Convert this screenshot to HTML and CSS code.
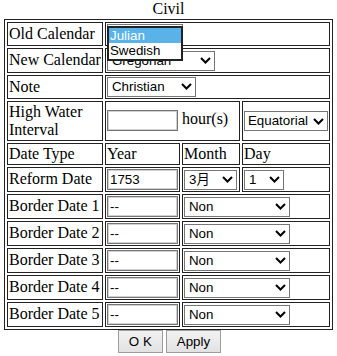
FILE: index.html
```html
<!DOCTYPE html>
<html>
  <head>
    <meta charset="utf-8">
    <title>Civil Calendar</title>
    <link rel="stylesheet" href="styles.css">
  </head>
  <body>
    <div class="title">Civil</div>
    <table class="calTable">
      <colgroup>
        <col class="c1"><col class="c2"><col class="c3"><col class="c4">
      </colgroup>
      <tr>
        <td>Old Calendar</td>
        <td colspan="3">
          <span class="dropWrap">
            <span class="sel wOld"><span>Julian</span><svg class="chev" width="11" height="7" viewBox="0 0 11 7"><polyline points="1,1 5.5,5.5 10,1"/></svg></span>
            <ul class="dropList">
              <li class="on">Julian</li>
              <li>Swedish</li>
            </ul>
          </span>
        </td>
      </tr>
      <tr>
        <td>New Calendar</td>
        <td colspan="3">
          <span class="sel wGreg"><span>Gregorian</span><svg class="chev" width="11" height="7" viewBox="0 0 11 7"><polyline points="1,1 5.5,5.5 10,1"/></svg></span>
        </td>
      </tr>
      <tr>
        <td>Note</td>
        <td colspan="3">
          <span class="sel wChr"><span>Christian</span><svg class="chev" width="11" height="7" viewBox="0 0 11 7"><polyline points="1,1 5.5,5.5 10,1"/></svg></span>
        </td>
      </tr>
      <tr>
        <td>High Water Interval</td>
        <td colspan="2"><input class="txt" type="text" value=""> hour(s)</td>
        <td>
          <span class="sel wEq"><span>Equatorial</span><svg class="chev" width="11" height="7" viewBox="0 0 11 7"><polyline points="1,1 5.5,5.5 10,1"/></svg></span>
        </td>
      </tr>
      <tr>
        <td>Date Type</td>
        <td>Year</td>
        <td>Month</td>
        <td>Day</td>
      </tr>
      <tr>
        <td>Reform Date</td>
        <td><input class="txt" type="text" value="1753"></td>
        <td>
          <span class="sel wMon"><span>3月</span><svg class="chev" width="11" height="7" viewBox="0 0 11 7"><polyline points="1,1 5.5,5.5 10,1"/></svg></span>
        </td>
        <td>
          <span class="sel wDay"><span>1</span><svg class="chev" width="11" height="7" viewBox="0 0 11 7"><polyline points="1,1 5.5,5.5 10,1"/></svg></span>
        </td>
      </tr>
      <tr>
        <td>Border Date 1</td>
        <td><input class="txt" type="text" value="--"></td>
        <td colspan="2">
          <span class="sel wNon"><span>Non</span><svg class="chev" width="11" height="7" viewBox="0 0 11 7"><polyline points="1,1 5.5,5.5 10,1"/></svg></span>
        </td>
      </tr>
      <tr>
        <td>Border Date 2</td>
        <td><input class="txt" type="text" value="--"></td>
        <td colspan="2">
          <span class="sel wNon"><span>Non</span><svg class="chev" width="11" height="7" viewBox="0 0 11 7"><polyline points="1,1 5.5,5.5 10,1"/></svg></span>
        </td>
      </tr>
      <tr>
        <td>Border Date 3</td>
        <td><input class="txt" type="text" value="--"></td>
        <td colspan="2">
          <span class="sel wNon"><span>Non</span><svg class="chev" width="11" height="7" viewBox="0 0 11 7"><polyline points="1,1 5.5,5.5 10,1"/></svg></span>
        </td>
      </tr>
      <tr>
        <td>Border Date 4</td>
        <td><input class="txt" type="text" value="--"></td>
        <td colspan="2">
          <span class="sel wNon"><span>Non</span><svg class="chev" width="11" height="7" viewBox="0 0 11 7"><polyline points="1,1 5.5,5.5 10,1"/></svg></span>
        </td>
      </tr>
      <tr>
        <td>Border Date 5</td>
        <td><input class="txt" type="text" value="--"></td>
        <td colspan="2">
          <span class="sel wNon"><span>Non</span><svg class="chev" width="11" height="7" viewBox="0 0 11 7"><polyline points="1,1 5.5,5.5 10,1"/></svg></span>
        </td>
      </tr>
    </table>
    <div class="btnRow">
      <button class="btn">O K</button>
      <button class="btn">Apply</button>
    </div>
  </body>
</html>
```

FILE: styles.css
```css
body {
  margin: 0;
  padding: 0;
  font-family: "Liberation Serif", "Times New Roman", serif;
  font-size: 16px;
  color: #000;
  background: #fff;
}
.title {
  text-align: center;
  height: 19px;
  line-height: 18px;
}
.calTable {
  margin: 0 auto;
  table-layout: fixed;
  width: 329px;
  border: 1px solid #222;
  border-spacing: 2px;
}
.c1 { width: 96px; }
.c2 { width: 75px; }
.c3 { width: 58px; }
.c4 { width: 88px; }
.calTable td {
  border: 1px solid #222;
  padding: 1px;
  line-height: 18px;
}

/* fake select boxes */
.sel {
  display: inline-flex;
  align-items: center;
  justify-content: space-between;
  box-sizing: border-box;
  height: 20px;
  padding: 0 3px 0 4px;
  border: 1px solid #767676;
  background: #fff;
  font-family: "Liberation Sans", Arial, "Noto Sans CJK JP", sans-serif;
  font-size: 13.33px;
  line-height: 16px;
  vertical-align: middle;
}
.chev {
  flex: none;
  fill: none;
  stroke: #000;
  stroke-width: 2;
}
.wOld { width: 76px; }
.wGreg { width: 108px; }
.wChr { width: 89px; }
.wEq { width: 84px; padding-left: 3px; }
.wMon { width: 53px; }
.wDay { width: 40px; }
.wNon { width: 106px; }

.txt {
  box-sizing: border-box;
  width: 71px;
  height: 21px;
  margin: 0;
  padding: 0 2px;
  border: 1px solid #767676;
  box-shadow: inset 0 0 0 1px #d0d0d0;
  font-family: "Liberation Sans", Arial, sans-serif;
  font-size: 13.33px;
  vertical-align: middle;
}

/* open dropdown of Old Calendar */
.dropWrap {
  position: relative;
  display: inline-block;
  vertical-align: middle;
  line-height: 0;
}
.dropList {
  position: absolute;
  left: 0;
  top: 2px;
  z-index: 2;
  box-sizing: border-box;
  width: 76px;
  margin: 0;
  padding: 0 0 1px;
  list-style: none;
  border: 2px solid #222;
  background: #fff;
  font-family: "Liberation Sans", Arial, sans-serif;
  font-size: 13.33px;
  line-height: 15px;
}
.dropList li {
  height: 15px;
  padding-left: 1px;
}
.dropList .on {
  background: #5ab3e8;
  color: #fff;
}

.btnRow {
  display: flex;
  justify-content: center;
  gap: 3px;
  padding-left: 2px;
}
.btn {
  box-sizing: border-box;
  height: 23px;
  margin: 0;
  padding: 0 10px;
  border: 1px solid #9c9c9c;
  background: linear-gradient(#f2f2f2, #e2e2e2);
  font-family: "Liberation Sans", Arial, sans-serif;
  font-size: 13.33px;
  color: #000;
}
```
